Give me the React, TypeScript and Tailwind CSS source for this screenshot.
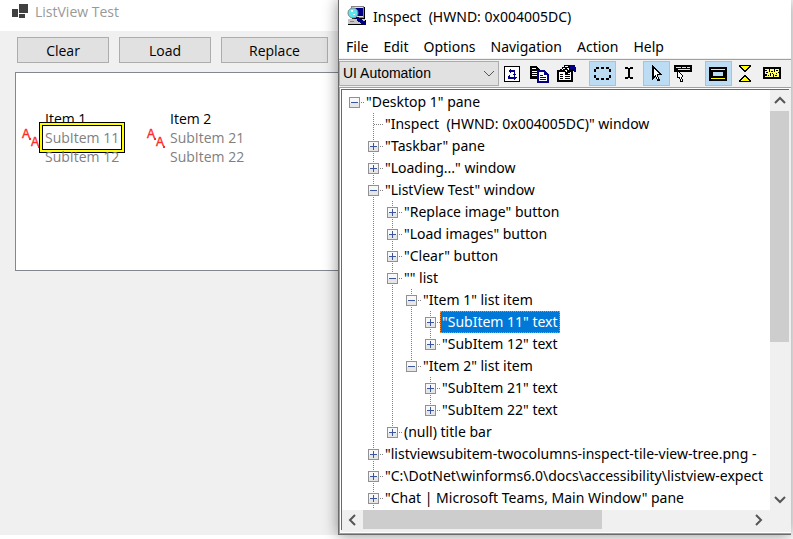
import type { ReactNode } from "react";

type Node = {
  label: string;
  open?: boolean;
  leaf?: boolean;
  selected?: boolean;
  more?: boolean;
  children?: Node[];
};

const desktop: Node = {
  label: '"Desktop 1" pane',
  open: true,
  children: [
    { label: '"Inspect  (HWND: 0x004005DC)" window', leaf: true },
    { label: '"Taskbar" pane' },
    { label: '"Loading..." window' },
    {
      label: '"ListView Test" window',
      open: true,
      children: [
        { label: '"Replace image" button' },
        { label: '"Load images" button' },
        { label: '"Clear" button' },
        {
          label: '"" list',
          open: true,
          children: [
            {
              label: '"Item 1" list item',
              open: true,
              children: [
                { label: '"SubItem 11" text', selected: true },
                { label: '"SubItem 12" text' },
              ],
            },
            {
              label: '"Item 2" list item',
              open: true,
              children: [{ label: '"SubItem 21" text' }, { label: '"SubItem 22" text' }],
            },
          ],
        },
        { label: "(null) title bar" },
      ],
    },
    { label: '"listviewsubitem-twocolumns-inspect-tile-view-tree.png -' },
    { label: '"C:\\DotNet\\winforms6.0\\docs\\accessibility\\listview-expect' },
    { label: '"Chat | Microsoft Teams, Main Window" pane', more: true },
  ],
};

function Guide({ d }: { d: string }) {
  return (
    <svg width="19" height="22" className="shrink-0" aria-hidden="true">
      <path d={d} stroke="#808080" strokeDasharray="1 1" fill="none" shapeRendering="crispEdges" />
    </svg>
  );
}

function Expander({ open, d, name }: { open: boolean; d: string; name: string }) {
  return (
    <button type="button" aria-expanded={open} aria-label={name} className="block shrink-0">
      <svg width="19" height="22" shapeRendering="crispEdges" className="block">
        <path d={d} stroke="#808080" strokeDasharray="1 1" fill="none" />
        <rect x="4.5" y="6.5" width="10" height="10" rx="1" fill="#f8f8f8" stroke="#919191" />
        <rect x="5" y="12" width="9" height="4" fill="#e6e6e6" />
        <path d={open ? "M6 11.5h7" : "M6 11.5h7M9.5 8v7"} stroke="#3b559e" fill="none" />
      </svg>
    </button>
  );
}

function TreeItem({ node, trail, last }: { node: Node; trail: boolean[]; last: boolean }) {
  const root = trail.length === 0;
  const vertical = root ? "" : last ? "M9.5 0V11" : "M9.5 0V22";
  const d = `${vertical}M10 11.5H19`;
  const open = !!node.open;
  return (
    <li role="treeitem" aria-selected={!!node.selected}>
      <div className="flex h-[22px] items-center">
        {trail.map((line, i) => (
          <Guide key={i} d={line ? "M9.5 0V22" : ""} />
        ))}
        {node.leaf ? <Guide d={d} /> : <Expander open={open} d={d} name={node.label} />}
        <span
          className={
            node.selected
              ? "h-[22px] border border-dotted border-[#ff8728] bg-[#0078d7] px-px leading-5 whitespace-pre text-white"
              : "px-0.5 leading-[22px] whitespace-pre"
          }
        >
          {node.label}
        </span>
      </div>
      {node.children && (
        <ul role="group">
          {node.children.map((child, i, all) => (
            <TreeItem
              key={child.label}
              node={child}
              trail={[...trail, root ? false : !last]}
              last={i === all.length - 1 && !child.more}
            />
          ))}
        </ul>
      )}
    </li>
  );
}

function Tool({ label, on, children }: { label: string; on?: boolean; children: ReactNode }) {
  return (
    <button
      type="button"
      aria-label={label}
      aria-pressed={on}
      className={
        on
          ? "flex h-[25px] w-[27px] items-center justify-center border border-[#90c8f6] bg-[#bcdcf4]"
          : "flex h-[25px] w-[27px] items-center justify-center border border-transparent"
      }
    >
      <svg width="21" height="19" viewBox="0 0 21 19" shapeRendering="crispEdges" fill="none">
        {children}
      </svg>
    </button>
  );
}

function Chevron({ d, width = 2 }: { d: string; width?: number }) {
  return (
    <svg width="12" height="12" viewBox="0 0 12 12" fill="none" stroke="#555" strokeWidth={width} aria-hidden="true">
      <path d={d} />
    </svg>
  );
}

const pointer =
  "M0 0h1v1h1v1h1v1h1v1h1v1h1v1h1v1h1v1h1v1h1v1H6v2h1v2h1v2H5v-2H4v-2H3v1H2v1H1v1H0z";

function Toolbar() {
  return (
    <div className="flex items-center border-t border-[#a0a0a0] bg-[#f0f0f0] pt-px pb-px">
      <div className="relative h-[25px] w-40 shrink-0">
        <select
          aria-label="Mode"
          className="h-full w-full appearance-none border border-[#adadad] bg-[#e1e1e1] pl-[3px] font-['Liberation_Sans',Arial,sans-serif] text-[14px] text-black"
        >
          <option>UI Automation</option>
        </select>
        <span className="pointer-events-none absolute top-[6px] right-1">
          <Chevron d="M1 4l5 5 5-5" width={1} />
        </span>
      </div>
      <div className="flex">
        <Tool label="Refresh">
          <rect x="2.5" y="2.5" width="15" height="15" fill="#fff" stroke="#000" />
          <path d="M6 7h1V6h1V5h1v1h4v4h1v1h-1v1h-1v-1h-1v-1h1V8H9v1H8V8H7z" fill="#000084" />
          <path d="M14 13h-1v-1h-1v1H8v-2H7v1H6v3h6v1h1v-1h1v-1h1v-1z" fill="#000084" />
        </Tool>
        <Tool label="Copy">
          <path d="M1 2h7v1h1v1h1v1h1v10H1z" fill="#000" />
          <path d="M3 4h4v1H3zM3 7h6v1H3zM3 9h6v1H3zM3 11h6v1H3z" fill="#fff" />
          <path d="M8 6h8v1h1v1h1v1h1v1h1v9H8z" fill="#000084" />
          <path d="M10 8h5v3h3v6h-8z" fill="#fff" />
          <path d="M11 11h3v1h-3zM11 13h6v1h-6zM11 15h6v1h-6z" fill="#000084" />
        </Tool>
        <Tool label="Properties">
          <path d="M1 6h16v12H1z" fill="#000" />
          <path d="M3 8h12v8H3z" fill="#fff" />
          <path d="M4 10h3v1H4zM9 10h5v1H9zM4 12h3v1H4zM9 12h5v1H9zM4 14h3v1H4zM9 14h5v1H9z" fill="#000" />
          <path d="M8 1h11v2h1v5h-2V7h-4v2h-2v1H9V8H6V7H4V5h2V3h2z" fill="#000" />
          <path d="M9 2h3v1H9zM7 4h2v1H7zM11 4h2v1h-2zM6 5h1v1H6zM9 6h2v1H9zM12 5h1v1h-1zM10 7h1v1h-1z" fill="#fff" />
          <path d="M14 1h5v2h1v5h-2V5h-4z" fill="#000084" />
        </Tool>
      </div>
      <div className="ml-[9px] flex">
        <Tool label="Show highlight rectangle" on>
          <path d="M4 4h3M9 4h3M14 4h3M4 15h3M9 15h3M14 15h3M3 5v3M3 11v3M18 5v3M18 11v3" stroke="#000" strokeWidth="2" />
        </Tool>
        <Tool label="Watch caret">
          <path d="M6 3h3v1h2V3h3v2h-3v8h3v2h-3v-1H9v1H6v-2h3V5H6z" fill="#000" />
        </Tool>
        <Tool label="Watch cursor" on>
          <g transform="translate(6 1)">
            <path d={pointer} fill="#000" />
            <path d="M2 4h1v1h1v1h1v1h1v1h1v1H5v3h1v2H5v-2H4v-2H3v1H2z" fill="#fff" />
          </g>
        </Tool>
        <Tool label="Watch tooltips">
          <path d="M1 1h18v7H1z" fill="#000" />
          <path d="M3 3h14v1H3z" fill="#ffff00" />
          <path d="M5 5h12v1H5z" fill="#ffff00" />
          <path d="M8 3h1v1H8zM13 3h1v1h-1z" fill="#000" />
          <path d="M4 6h1v1h1v1h1v1h1v1h1v1h1v2H9v2h1v3H7v-3H6v-1H4z" fill="#000" />
          <path d="M5 8h1v1h1v1h1v1h1v2H8v2h1v2H8v-2H7v-2H5z" fill="#fff" />
        </Tool>
      </div>
      <div className="ml-2 flex">
        <Tool label="Focus rectangle" on>
          <path d="M1 3h18v14H1z" fill="#000" />
          <path d="M3 5h14v1H3zM3 14h14v1H3z" fill="#ffff00" />
          <path d="M5 8h10v4H5z" fill="#bcdcf4" />
        </Tool>
        <Tool label="Watch focus">
          <path d="M4 1h12v2h-1v1h-1v1h-1v1h-1v1h-1v1H9V7H8V6H7V5H6V4H5V3H4z" fill="#000" />
          <path d="M6 2h8v1h-1v1h-1v1h-1v1H9V5H8V4H7V3H6z" fill="#ffff00" />
          <path d="M9 11h2v1h1v1h1v1h1v1h1v1h1v2H4v-2h1v-1h1v-1h1v-1h1v-1h1z" fill="#000" />
          <path d="M9 13h2v1h1v1h1v1h1v1H6v-1h1v-1h1v-1h1z" fill="#ffff00" />
        </Tool>
        <Tool label="Show information">
          <path d="M1 3h18v12H1z" fill="#000" />
          <path d="M3 5h14v8H3z" fill="#ffff66" />
          <path d="M3 6h2v1H3zM7 5h1v3H7zM12 5h1v3h-1zM4 8h2v1H4zM9 7h2v1H9zM14 6h2v1h-2zM8 9h1v3H8zM3 10h2v2H3zM11 10h1v3h-1zM14 9h1v1h-1zM13 11h2v1h-2zM16 8h1v1h-1zM6 11h1v1H6zM10 9h1v1h-1z" fill="#000" />
        </Tool>
      </div>
    </div>
  );
}

function InspectIcon() {
  return (
    <svg width="21" height="20" viewBox="0 0 21 20" shapeRendering="crispEdges" aria-hidden="true">
      <path d="M4 0h13v12H4z" fill="#848484" />
      <path d="M5 1h11v10H5z" fill="#dedede" />
      <path d="M7 2h9v8H7z" fill="#000084" />
      <path d="M17 1h1v12H5v-1h12z" fill="#000" />
      <path d="M1 13h17v5H1z" fill="#c6c6c6" />
      <path d="M18 14h1v5H1v-1h17z" fill="#000" />
      <path d="M3 15h4v1H3z" fill="#848484" />
      <circle cx="6" cy="7" r="5" fill="#5ce6f0" stroke="#848484" shapeRendering="auto" />
      <path d="M4 4h2v2H4zM6 8h2v1H6z" fill="#fff" />
      <path d="M9 11h3v1h1v1h2v1h1v1h2v1h1v3h-3v-1h-2v-1h-1v-1h-2v-1h-1v-2H9z" fill="#000084" />
    </svg>
  );
}

function InspectWindow() {
  return (
    <section
      aria-label="Inspect"
      className="relative flex min-w-0 flex-1 flex-col border-b border-l border-[#6b6b6b] bg-white font-['Noto_Sans','Segoe_UI',sans-serif] text-[14px] text-black shadow-[0_0_14px_rgba(0,0,0,0.45)]"
    >
      <header className="flex h-8 items-center gap-[5px] pl-2">
        <InspectIcon />
        <h1 className="whitespace-pre">Inspect  (HWND: 0x004005DC)</h1>
      </header>
      <nav className="flex h-[27px] items-end gap-[15px] border-b border-[#f0f0f0] pl-[7px] leading-[22px]">
        {["File", "Edit", "Options", "Navigation", "Action", "Help"].map((m) => (
          <button key={m} type="button">
            {m}
          </button>
        ))}
      </nav>
      <Toolbar />
      <div className="flex min-h-0 flex-1 flex-col border-t border-b border-l border-[#a0a0a0] bg-[#f0f0f0]">
        <div className="flex min-h-0 flex-1 flex-col border-t border-b border-l border-white pr-0.5 pb-0.5">
          <div className="flex min-h-0 flex-1 flex-col border-t border-l border-[#696969]">
            <div className="flex min-h-0 flex-1">
              <ul role="tree" className="min-w-0 flex-1 overflow-hidden bg-white pt-px pl-[3px]">
                <TreeItem node={desktop} trail={[]} last />
              </ul>
              <div className="flex w-[19px] flex-col items-center bg-[#f0f0f0]">
                <button type="button" aria-label="Scroll up" className="flex h-[21px] shrink-0 items-center">
                  <Chevron d="M1 8l5-5 5 5" />
                </button>
                <div className="w-full basis-[55%] bg-[#cdcdcd]" />
                <div className="flex-1" />
                <button type="button" aria-label="Scroll down" className="flex h-[21px] shrink-0 items-center">
                  <Chevron d="M1 3l5 5 5-5" />
                </button>
              </div>
            </div>
            <div className="flex h-5 items-center bg-[#f0f0f0] pr-[21px] pb-px">
              <button type="button" aria-label="Scroll left" className="flex w-[21px] shrink-0 justify-center">
                <Chevron d="M8 1L3 6l5 5" />
              </button>
              <div className="h-full basis-[56%] bg-[#cdcdcd]" />
              <div className="flex-1" />
              <button type="button" aria-label="Scroll right" className="flex w-[21px] shrink-0 justify-center">
                <Chevron d="M4 1l5 5-5 5" />
              </button>
            </div>
          </div>
        </div>
      </div>
    </section>
  );
}

function TileImage() {
  return (
    <svg
      width="20"
      height="20"
      viewBox="0 0 20 20"
      fill="#ff2a2a"
      stroke="#ff2a2a"
      strokeWidth="0.4"
      className="shrink-0 overflow-visible font-['Liberation_Sans',sans-serif] text-[12px]"
      aria-hidden="true"
    >
      <text x="1" y="9">
        A
      </text>
      <text x="10" y="17">
        A
      </text>
      <path d="M8 9h2v2H8zM17 17h2v2h-2z" stroke="none" />
    </svg>
  );
}

const tiles = [
  { title: "Item 1", lines: ["SubItem 11", "SubItem 12"] },
  { title: "Item 2", lines: ["SubItem 21", "SubItem 22"] },
];

function ListViewWindow() {
  return (
    <section
      aria-label="ListView Test"
      className="flex w-[338px] shrink-0 flex-col overflow-hidden bg-[#f0f0f0] font-['Open_Sans','Segoe_UI',sans-serif] text-[14px] text-black"
    >
      <header className="flex h-[31px] items-center gap-[7px] bg-white pb-2 pl-3">
        <svg width="16" height="15" viewBox="0 0 16 15" fill="#404040" shapeRendering="crispEdges" aria-hidden="true">
          <path d="M7 0h9v9H7zM0 5h6v8H0zM7 10h6v4H7z" />
        </svg>
        <h2 className="text-[#999]">ListView Test</h2>
      </header>
      <div className="flex gap-2.5 pt-1.5 pl-[17px]">
        {["Clear", "Load"].map((b) => (
          <button key={b} type="button" className="h-[26px] w-[92px] border border-[#adadad] bg-[#e1e1e1]">
            {b}
          </button>
        ))}
        <button type="button" className="h-[26px] w-[107px] border border-[#adadad] bg-[#e1e1e1]">
          Replace
        </button>
      </div>
      <ul className="mt-[9px] ml-[15px] flex h-[199px] border-y border-l border-[#828790] bg-white pt-9 pl-[5px]">
        {tiles.map((tile, t) => (
          <li key={tile.title} className="flex w-[125px] shrink-0 items-start gap-1">
            <div className="pt-5">
              <TileImage />
            </div>
            <div className="leading-[19px]">
              <p>{tile.title}</p>
              {tile.lines.map((line, i) => (
                <p key={line} className="relative text-[#808080]">
                  {line}
                  {t === 0 && i === 0 && (
                    <span className="absolute -inset-x-1.5 -top-1.5 -bottom-1.5 border border-black">
                      <span className="block h-full border-2 border-[#ffff00]">
                        <span className="block h-full border border-black" />
                      </span>
                    </span>
                  )}
                </p>
              ))}
            </div>
          </li>
        ))}
      </ul>
    </section>
  );
}

export default function App() {
  return (
    <main className="flex h-screen overflow-hidden bg-white pr-0.5 pb-1">
      <ListViewWindow />
      <InspectWindow />
    </main>
  );
}
